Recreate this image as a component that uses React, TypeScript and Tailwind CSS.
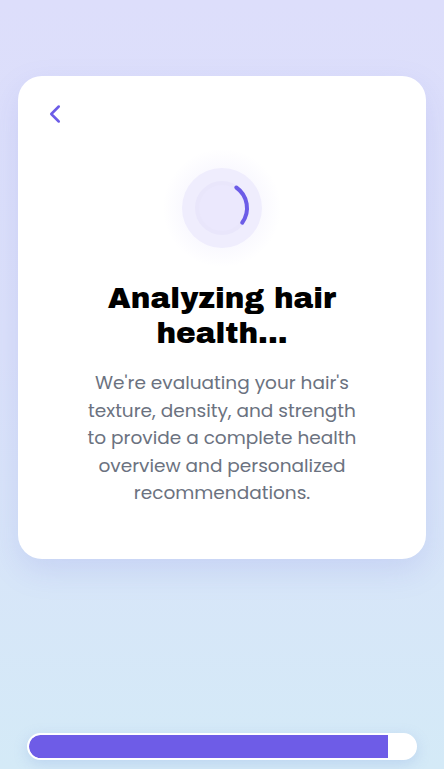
import { ChevronLeft } from "lucide-react";

// Loading screen shown while the hair analysis runs
const progress = 93;

const Spinner = () => (
  <div className="relative flex h-[120px] w-[120px] items-center justify-center">
    <div className="absolute inset-0 rounded-full bg-[radial-gradient(circle,_rgba(124,108,240,0.12)_0%,_rgba(124,108,240,0)_70%)]" />
    <div className="relative flex h-[80px] w-[80px] items-center justify-center rounded-full bg-[#efedfd]">
      <svg width="64" height="64" viewBox="0 0 64 64" fill="none">
        <circle cx="32" cy="32" r="25" stroke="#e9e6fb" strokeWidth="4" fill="#ebe8fd" />
        <path
          d="M46.3 11.5 A25 25 0 0 1 52.2 46.7"
          stroke="#6c5ce7"
          strokeWidth="4"
          strokeLinecap="round"
        />
      </svg>
    </div>
  </div>
);

export default function App() {
  return (
    <div className="flex min-h-[769px] w-full flex-col bg-[linear-gradient(180deg,#dddefb_0%,#dbe1fa_45%,#d4eaf7_100%)] px-[18px] pt-[76px]">
      <div className="flex h-[483px] flex-col rounded-[24px] bg-white px-[22px] pt-[23px] shadow-[0_12px_30px_rgba(120,130,230,0.18)]">
        <button className="flex h-[30px] w-[30px] items-center justify-center text-[#6c5ce7]">
          <ChevronLeft size={30} strokeWidth={2} />
        </button>
        <div className="mt-[19px] flex justify-center">
          <Spinner />
        </div>
        <h1 className="mt-[13px] text-center font-['Archivo_Black','Inter','Liberation_Sans',sans-serif] text-[29.5px] font-normal leading-[35px] text-black">
          Analyzing hair
          <br />
          health...
        </h1>
        <p className="mx-auto mt-[18px] w-[272px] text-center font-['Poppins','Lato','Liberation_Sans',sans-serif] text-[18.5px] leading-[27.5px] text-[#6b7280]">
          We're evaluating your hair's texture, density, and strength to provide a complete health overview and personalized recommendations.
        </p>
      </div>
      <div className="flex-1" />
      <div className="mb-[9px] ml-[9px] mr-[9px] h-[27px] overflow-hidden rounded-full border-2 border-white bg-white shadow-[0_4px_14px_rgba(120,150,220,0.25)]">
        <div className="h-full rounded-l-full bg-[#6e5ce7]" style={{ width: `${progress}%` }} />
      </div>
    </div>
  );
}
